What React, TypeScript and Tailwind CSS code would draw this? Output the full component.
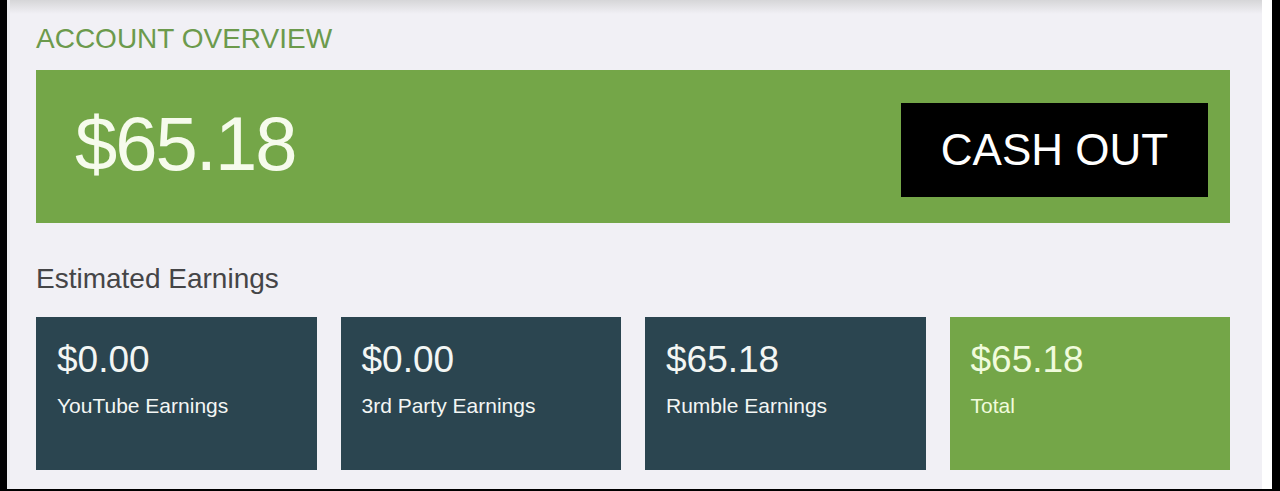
import React from "react";

const cards = [
  { amount: "$0.00", label: "YouTube Earnings", green: false },
  { amount: "$0.00", label: "3rd Party Earnings", green: false },
  { amount: "$65.18", label: "Rumble Earnings", green: false },
  { amount: "$65.18", label: "Total", green: true },
];

export default function App() {
  return (
    <div
      className="w-[1280px] h-[491px] flex flex-col bg-black overflow-hidden"
      style={{ fontFamily: '"Liberation Sans", Arial, sans-serif' }}
    >
      <div className="flex flex-1 min-h-0">
        <div className="w-[7px] bg-black" />
        <div className="w-[3px] bg-[#e9e9ec]" />
        <div className="flex-1 bg-[#f1f0f5] flex flex-col relative">
          <div className="h-[14px] bg-gradient-to-b from-[#d6d6d8] to-[#f1f0f5]" />
          <div className="pl-[26px] pr-[32px] flex flex-col">
            <div className="mt-[11px] text-[28px] leading-[28px] text-[#6c9a4c]">
              ACCOUNT OVERVIEW
            </div>
            <div className="mt-[17px] h-[153px] bg-[#74a648] flex items-start justify-between pl-[39px] pr-[22px]">
              <div className="mt-[36px] text-[76px] leading-[76px] text-[#f6fbec] tracking-[-2px]">
                $65.18
              </div>
              <div className="mt-[33px] w-[307px] h-[94px] bg-black flex items-center justify-center text-[44px] leading-[44px] text-white">
                CASH OUT
              </div>
            </div>
            <div className="mt-[42px] text-[28px] leading-[27px] text-[#454547]">
              Estimated Earnings
            </div>
            <div className="mt-[25px] grid grid-cols-4 gap-[24px]">
              {cards.map((c, i) => (
                <div
                  key={i}
                  className={
                    c.green
                      ? "h-[153px] bg-[#74a648] pl-[21px] pt-[25px] text-[#f0fbdc]"
                      : "h-[153px] bg-[#2b4550] pl-[21px] pt-[25px] text-[#f3f6f4]"
                  }
                >
                  <div className="text-[37px] leading-[36px]">{c.amount}</div>
                  <div className="mt-[18px] text-[21px] leading-[20px]">{c.label}</div>
                </div>
              ))}
            </div>
          </div>
        </div>
        <div className="w-[10px] bg-white" />
        <div className="w-[8px] bg-black" />
      </div>
      <div className="h-[2px] bg-black" />
    </div>
  );
}
